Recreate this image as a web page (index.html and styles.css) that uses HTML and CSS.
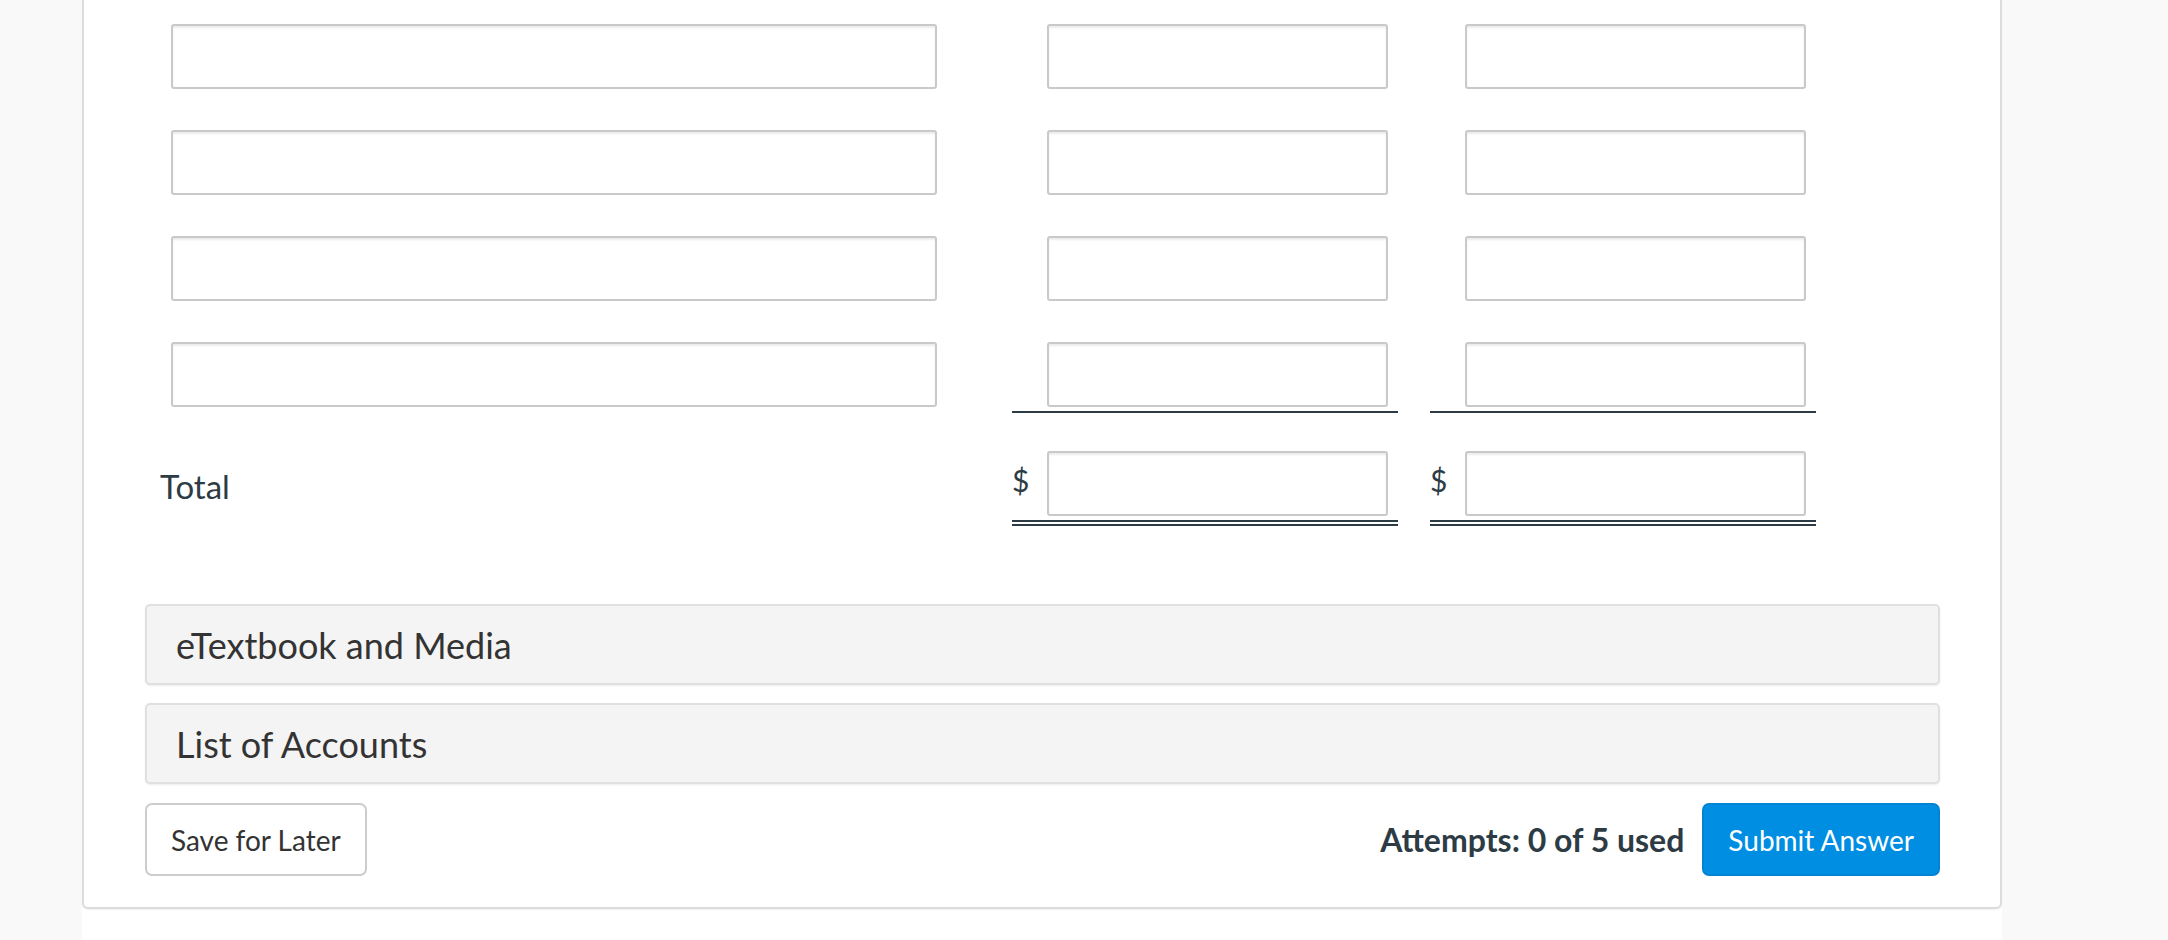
FILE: index.html
```html
<!DOCTYPE html>
<html lang="en">
<head>
<meta charset="utf-8">
<title>Question</title>
<link rel="stylesheet" href="styles.css">
</head>
<body>
<div class="page">
  <div class="panel">
    <div class="sheet">
      <div class="row">
        <div class="cell-label"><input class="field field-wide" type="text"></div>
        <div class="cell-num"><span class="cur"></span><input class="field field-num" type="text"></div>
        <div class="cell-num cell-last"><span class="cur"></span><input class="field field-num" type="text"></div>
      </div>
      <div class="row">
        <div class="cell-label"><input class="field field-wide" type="text"></div>
        <div class="cell-num"><span class="cur"></span><input class="field field-num" type="text"></div>
        <div class="cell-num cell-last"><span class="cur"></span><input class="field field-num" type="text"></div>
      </div>
      <div class="row">
        <div class="cell-label"><input class="field field-wide" type="text"></div>
        <div class="cell-num"><span class="cur"></span><input class="field field-num" type="text"></div>
        <div class="cell-num cell-last"><span class="cur"></span><input class="field field-num" type="text"></div>
      </div>
      <div class="row row-sub">
        <div class="cell-label"><input class="field field-wide" type="text"></div>
        <div class="cell-num"><span class="cur"></span><input class="field field-num" type="text"></div>
        <div class="cell-num cell-last"><span class="cur"></span><input class="field field-num" type="text"></div>
      </div>
      <div class="row row-total">
        <div class="cell-label"><span class="total-label">Total</span></div>
        <div class="cell-num"><span class="cur">$</span><input class="field field-num" type="text"></div>
        <div class="cell-num cell-last"><span class="cur">$</span><input class="field field-num" type="text"></div>
      </div>
    </div>

    <div class="accordions">
      <div class="accordion">eTextbook and Media</div>
      <div class="accordion">List of Accounts</div>
    </div>

    <div class="actions">
      <button class="btn btn-default" type="button">Save for Later</button>
      <div class="actions-right">
        <span class="attempts">Attempts: 0 of 5 used</span>
        <button class="btn btn-primary" type="button">Submit Answer</button>
      </div>
    </div>
  </div>
</div>
</body>
</html>
```

FILE: styles.css
```css
html, body {
  margin: 0;
  padding: 0;
}
body {
  background: #f9f9f9;
  font-family: Lato, "Open Sans", "Liberation Sans", sans-serif;
  color: #2d3b45;
  height: 940px;
  overflow: hidden;
}
.page {
  display: flow-root;
  margin-left: 82px;
  width: 1920px;
  height: 940px;
  background: #fff;
}
.panel {
  box-sizing: border-box;
  width: 1920px;
  margin-top: -15px;
  border: 2px solid #dcdcdc;
  border-radius: 0 0 6px 6px;
  padding: 0 60px 31px 61px;
  box-shadow: 0 1px 2px rgba(0,0,0,0.06);
  background: #fff;
}
.sheet {
  display: flex;
  flex-direction: column;
}
.row {
  display: flex;
  align-items: flex-start;
}
.cell-label {
  box-sizing: border-box;
  width: 867px;
  padding: 37px 0 4px 26px;
  display: flex;
  align-items: center;
  height: 106px;
}
.cell-num {
  box-sizing: border-box;
  width: 386px;
  padding: 37px 0 4px 0;
  display: flex;
  align-items: center;
}
.cell-last {
  margin-left: 32px;
}
.cur {
  width: 35px;
  flex: 0 0 35px;
  font-size: 30px;
  line-height: 1;
  color: #2d3b45;
  padding-bottom: 8px;
}
.field {
  box-sizing: border-box;
  height: 65px;
  margin: 0;
  border: 2px solid #c9c9c9;
  border-radius: 3px;
  box-shadow: inset 0 2px 2px rgba(0,0,0,0.08);
  background: #fff;
  padding: 0 12px;
  font-family: inherit;
  font-size: 28px;
}
.field-wide {
  width: 766px;
}
.field-num {
  width: 341px;
}
.row-sub .cell-num {
  border-bottom: 2px solid #2d3b45;
}
.row-total .cell-label,
.row-total .cell-num {
  padding-top: 38px;
}
.row-total .cell-label {
  padding-left: 15px;
  height: 107px;
}
.row-total .cell-num {
  border-bottom: 6px double #2d3b45;
}
.total-label {
  font-size: 33px;
  color: #2d3b45;
  padding-top: 4px;
}
.accordions {
  margin-top: 78px;
  display: flex;
  flex-direction: column;
  gap: 18px;
}
.accordion {
  box-sizing: border-box;
  height: 81px;
  display: flex;
  align-items: center;
  padding-left: 29px;
  background: #f4f4f4;
  border: 2px solid #e0e0e0;
  border-radius: 5px;
  box-shadow: 0 1px 2px rgba(0,0,0,0.08);
  font-size: 36px;
  color: #333;
}
.actions {
  margin-top: 19px;
  display: flex;
  justify-content: space-between;
  align-items: center;
}
.actions-right {
  display: flex;
  align-items: center;
  gap: 18px;
}
.btn {
  box-sizing: border-box;
  height: 73px;
  border-radius: 7px;
  font-family: inherit;
  font-size: 28px;
  padding: 0 24px;
  white-space: nowrap;
  cursor: pointer;
}
.btn-default {
  background: #fff;
  border: 2px solid #cccccc;
  color: #333;
}
.btn-primary {
  background: #008ee2;
  border: 2px solid #0084d3;
  color: #fff;
}
.attempts {
  font-size: 32px;
  font-weight: 700;
  color: #2d3b45;
}
```
